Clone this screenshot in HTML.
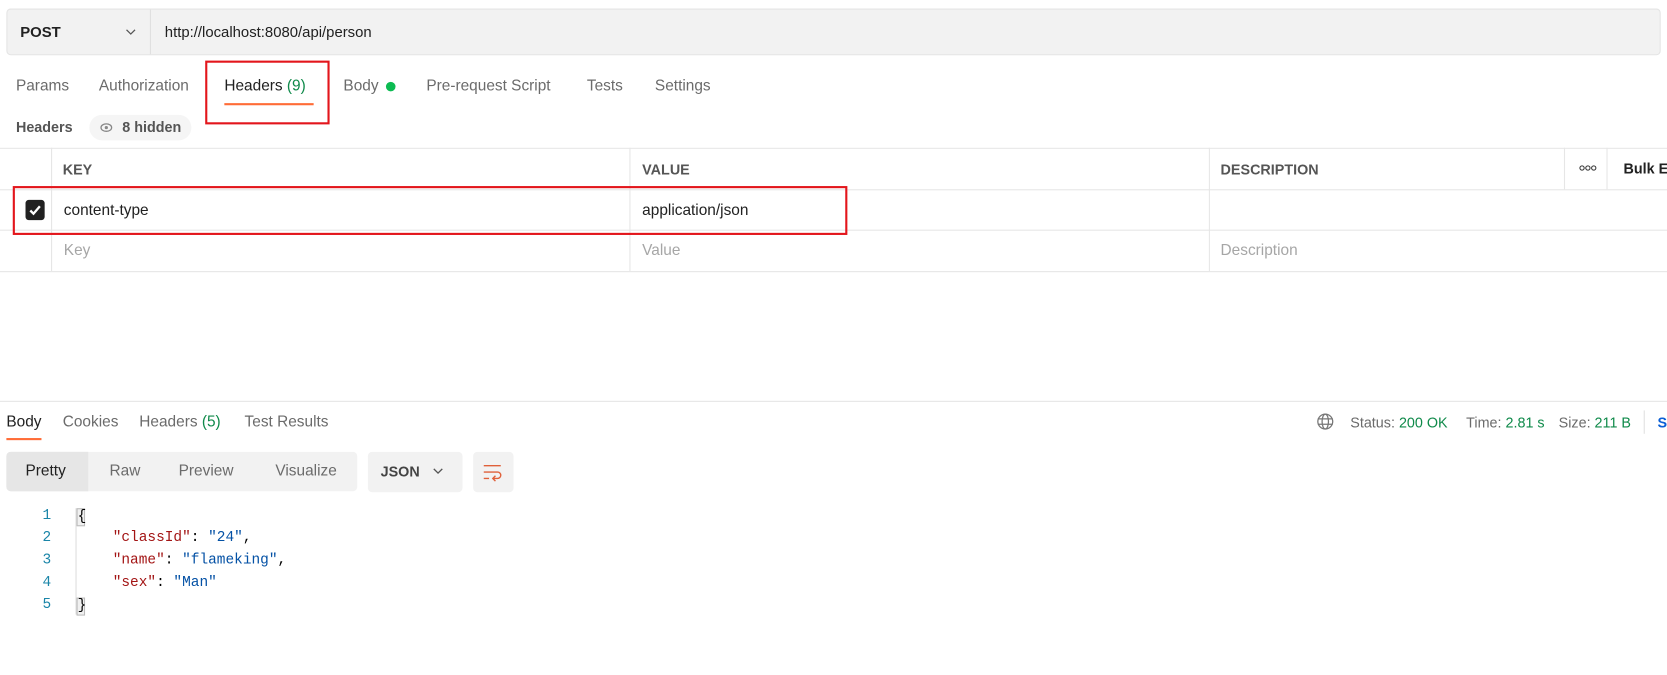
<!DOCTYPE html>
<html><head><meta charset="utf-8"><style>
*{box-sizing:border-box;margin:0;padding:0}
body{width:1667px;height:675px;overflow:hidden;background:#fff;font-family:"Liberation Sans",sans-serif;}
#c{position:absolute;left:0;top:0;width:1568px;height:635px;transform:scale(1.0632);transform-origin:0 0;}
.a{position:absolute;white-space:nowrap}
.t{font-size:14.5px;color:#6b6b6b}
.mono{font-family:"Liberation Mono",monospace;font-size:13.6px}
.k{color:#a31515}.v{color:#0451a5}
.ln{color:#1a85a8}
</style></head><body><div id="c">
<div class="a" style="left:6px;top:8px;width:1556px;height:44px;background:#f2f2f2;border:1px solid #e4e4e4;border-radius:4px"></div>
<div class="a" style="left:141px;top:9px;width:1px;height:42px;background:#e0e0e0"></div>
<div class="a" style="left:19px;top:22px;font-size:14px;font-weight:bold;color:#212121">POST</div>
<svg class="a" style="left:117px;top:25px" width="12" height="10"><path d="M2 3l4 4 4-4" fill="none" stroke="#555" stroke-width="1.2"/></svg>
<div class="a" style="left:155px;top:22px;font-size:14px;color:#212121">http://localhost:8080/api/person</div>

<div class="a t" style="left:15px;top:73px">Params</div>
<div class="a t" style="left:93px;top:73px">Authorization</div>
<div class="a t" style="left:211px;top:73px;color:#212121">Headers <span style="color:#0f8a4a">(9)</span></div>
<div class="a" style="left:211px;top:97px;width:84px;height:2px;background:#ff6c37"></div>
<div class="a t" style="left:323px;top:73px">Body</div>
<div class="a" style="left:363px;top:77px;width:9px;height:9px;border-radius:50%;background:#0cbb52"></div>
<div class="a t" style="left:401px;top:73px">Pre-request Script</div>
<div class="a t" style="left:552px;top:73px">Tests</div>
<div class="a t" style="left:616px;top:73px">Settings</div>
<div class="a" style="left:193px;top:57px;width:117px;height:60px;border:2px solid #e3161c"></div>

<div class="a" style="left:15px;top:112px;font-size:13.5px;font-weight:bold;color:#555">Headers</div>
<div class="a" style="left:84px;top:108px;width:96px;height:24px;border-radius:12px;background:#f5f5f5"></div>
<svg class="a" style="left:94px;top:115px" width="12" height="10"><ellipse cx="6" cy="5" rx="5" ry="3.5" fill="none" stroke="#888" stroke-width="1.2"/><circle cx="6" cy="5" r="1.5" fill="#888"/></svg>
<div class="a" style="left:115px;top:112px;font-size:13.5px;font-weight:bold;color:#555">8 hidden</div>

<div class="a" style="left:0;top:139px;width:1568px;height:1px;background:#e6e6e6"></div>
<div class="a" style="left:0;top:178px;width:1568px;height:1px;background:#e6e6e6"></div>
<div class="a" style="left:0;top:216px;width:1568px;height:1px;background:#e6e6e6"></div>
<div class="a" style="left:0;top:255px;width:1568px;height:1px;background:#e6e6e6"></div>
<div class="a" style="left:48px;top:139px;width:1px;height:116px;background:#e6e6e6"></div>
<div class="a" style="left:592px;top:139px;width:1px;height:116px;background:#e6e6e6"></div>
<div class="a" style="left:1137px;top:139px;width:1px;height:116px;background:#e6e6e6"></div>
<div class="a" style="left:1471px;top:139px;width:1px;height:39px;background:#e6e6e6"></div>
<div class="a" style="left:1511px;top:139px;width:1px;height:39px;background:#e6e6e6"></div>
<div class="a" style="left:59px;top:152px;font-size:13.5px;font-weight:bold;color:#555">KEY</div>
<div class="a" style="left:604px;top:152px;font-size:13.5px;font-weight:bold;color:#555">VALUE</div>
<div class="a" style="left:1148px;top:152px;font-size:13.5px;font-weight:bold;color:#555">DESCRIPTION</div>
<svg class="a" style="left:1485px;top:155px" width="18" height="6"><circle cx="3" cy="3" r="2" fill="none" stroke="#333" stroke-width="1"/><circle cx="8.5" cy="3" r="2" fill="none" stroke="#333" stroke-width="1"/><circle cx="14" cy="3" r="2" fill="none" stroke="#333" stroke-width="1"/></svg>
<div class="a" style="left:1527px;top:151px;font-size:13.5px;font-weight:bold;color:#212121">Bulk Edit</div>

<div class="a" style="left:24px;top:188px;width:18px;height:19px;border-radius:3px;background:#212121"></div>
<svg class="a" style="left:24px;top:188px" width="18" height="19"><path d="M4.5 10l3 3 6-7" fill="none" stroke="#fff" stroke-width="2.2"/></svg>
<div class="a" style="left:60px;top:190px;font-size:14.5px;color:#212121">content-type</div>
<div class="a" style="left:604px;top:190px;font-size:14.5px;color:#212121">application/json</div>
<div class="a" style="left:60px;top:228px;font-size:14.5px;color:#a6a6a6">Key</div>
<div class="a" style="left:604px;top:228px;font-size:14.5px;color:#a6a6a6">Value</div>
<div class="a" style="left:1148px;top:228px;font-size:14.5px;color:#a6a6a6">Description</div>
<div class="a" style="left:12px;top:175px;width:785px;height:46px;border:2px solid #e3161c"></div>

<div class="a" style="left:0;top:377px;width:1568px;height:1px;background:#e6e6e6"></div>
<div class="a t" style="left:6px;top:389px;color:#212121">Body</div>
<div class="a" style="left:6px;top:412px;width:33px;height:2px;background:#ff6c37"></div>
<div class="a t" style="left:59px;top:389px">Cookies</div>
<div class="a t" style="left:131px;top:389px">Headers <span style="color:#0f8a4a">(5)</span></div>
<div class="a t" style="left:230px;top:389px">Test Results</div>

<svg class="a" style="left:1238px;top:388px" width="17" height="17"><circle cx="8.5" cy="8.5" r="7" fill="none" stroke="#777" stroke-width="1.2"/><ellipse cx="8.5" cy="8.5" rx="3" ry="7" fill="none" stroke="#777" stroke-width="1.2"/><path d="M1.5 6h14M1.5 11h14" stroke="#777" stroke-width="1.2"/></svg>
<div class="a" style="left:1270px;top:390px;font-size:13.5px;color:#6b6b6b">Status: <span style="color:#0f8a4a">200 OK</span></div>
<div class="a" style="left:1379px;top:390px;font-size:13.5px;color:#6b6b6b">Time: <span style="color:#0f8a4a">2.81 s</span></div>
<div class="a" style="left:1466px;top:390px;font-size:13.5px;color:#6b6b6b">Size: <span style="color:#0f8a4a">211 B</span></div>
<div class="a" style="left:1546px;top:386px;width:1px;height:22px;background:#e0e0e0"></div>
<div class="a" style="left:1559px;top:390px;font-size:13.5px;color:#0b5fd6;font-weight:bold">Save</div>

<div class="a" style="left:6px;top:425px;width:330px;height:37px;border-radius:4px;background:#f2f2f2"></div>
<div class="a" style="left:6px;top:425px;width:77px;height:37px;border-radius:4px 0 0 4px;background:#e6e6e6"></div>
<div class="a t" style="left:24px;top:435px;color:#212121">Pretty</div>
<div class="a t" style="left:103px;top:435px">Raw</div>
<div class="a t" style="left:168px;top:435px">Preview</div>
<div class="a t" style="left:259px;top:435px">Visualize</div>
<div class="a" style="left:346px;top:425px;width:89px;height:38px;border-radius:4px;background:#f2f2f2"></div>
<div class="a" style="left:358px;top:436px;font-size:13.5px;font-weight:bold;color:#444">JSON</div>
<svg class="a" style="left:406px;top:439px" width="12" height="10"><path d="M2 2l4 4 4-4" fill="none" stroke="#555" stroke-width="1.2"/></svg>
<div class="a" style="left:445px;top:425px;width:38px;height:38px;border-radius:4px;background:#f2f2f2"></div>
<svg class="a" style="left:453px;top:435px" width="22" height="18"><path d="M2 3h16M2 9h13a3 3 0 0 1 0 6h-4M13 12.5l-2.5 2.5 2.5 2.5M2 15h5" fill="none" stroke="#e0603a" stroke-width="1.3"/></svg>

<div class="a" style="left:71px;top:478px;width:1px;height:100px;background:#ddd"></div>
<div class="a mono ln" style="left:40px;top:478px">1</div>
<div class="a mono ln" style="left:40px;top:499px">2</div>
<div class="a mono ln" style="left:40px;top:520px">3</div>
<div class="a mono ln" style="left:40px;top:541px">4</div>
<div class="a mono ln" style="left:40px;top:562px">5</div>
<div class="a mono" style="left:72px;top:478px;border:1px solid #bbb;background:#f0f0f0;line-height:15px;width:8px">{</div>
<div class="a mono" style="left:106px;top:499px"><span class="k">"classId"</span>: <span class="v">"24"</span>,</div>
<div class="a mono" style="left:106px;top:520px"><span class="k">"name"</span>: <span class="v">"flameking"</span>,</div>
<div class="a mono" style="left:106px;top:541px"><span class="k">"sex"</span>: <span class="v">"Man"</span></div>
<div class="a mono" style="left:72px;top:562px;border:1px solid #bbb;background:#f0f0f0;line-height:15px;width:8px">}</div>
</div></body></html>
